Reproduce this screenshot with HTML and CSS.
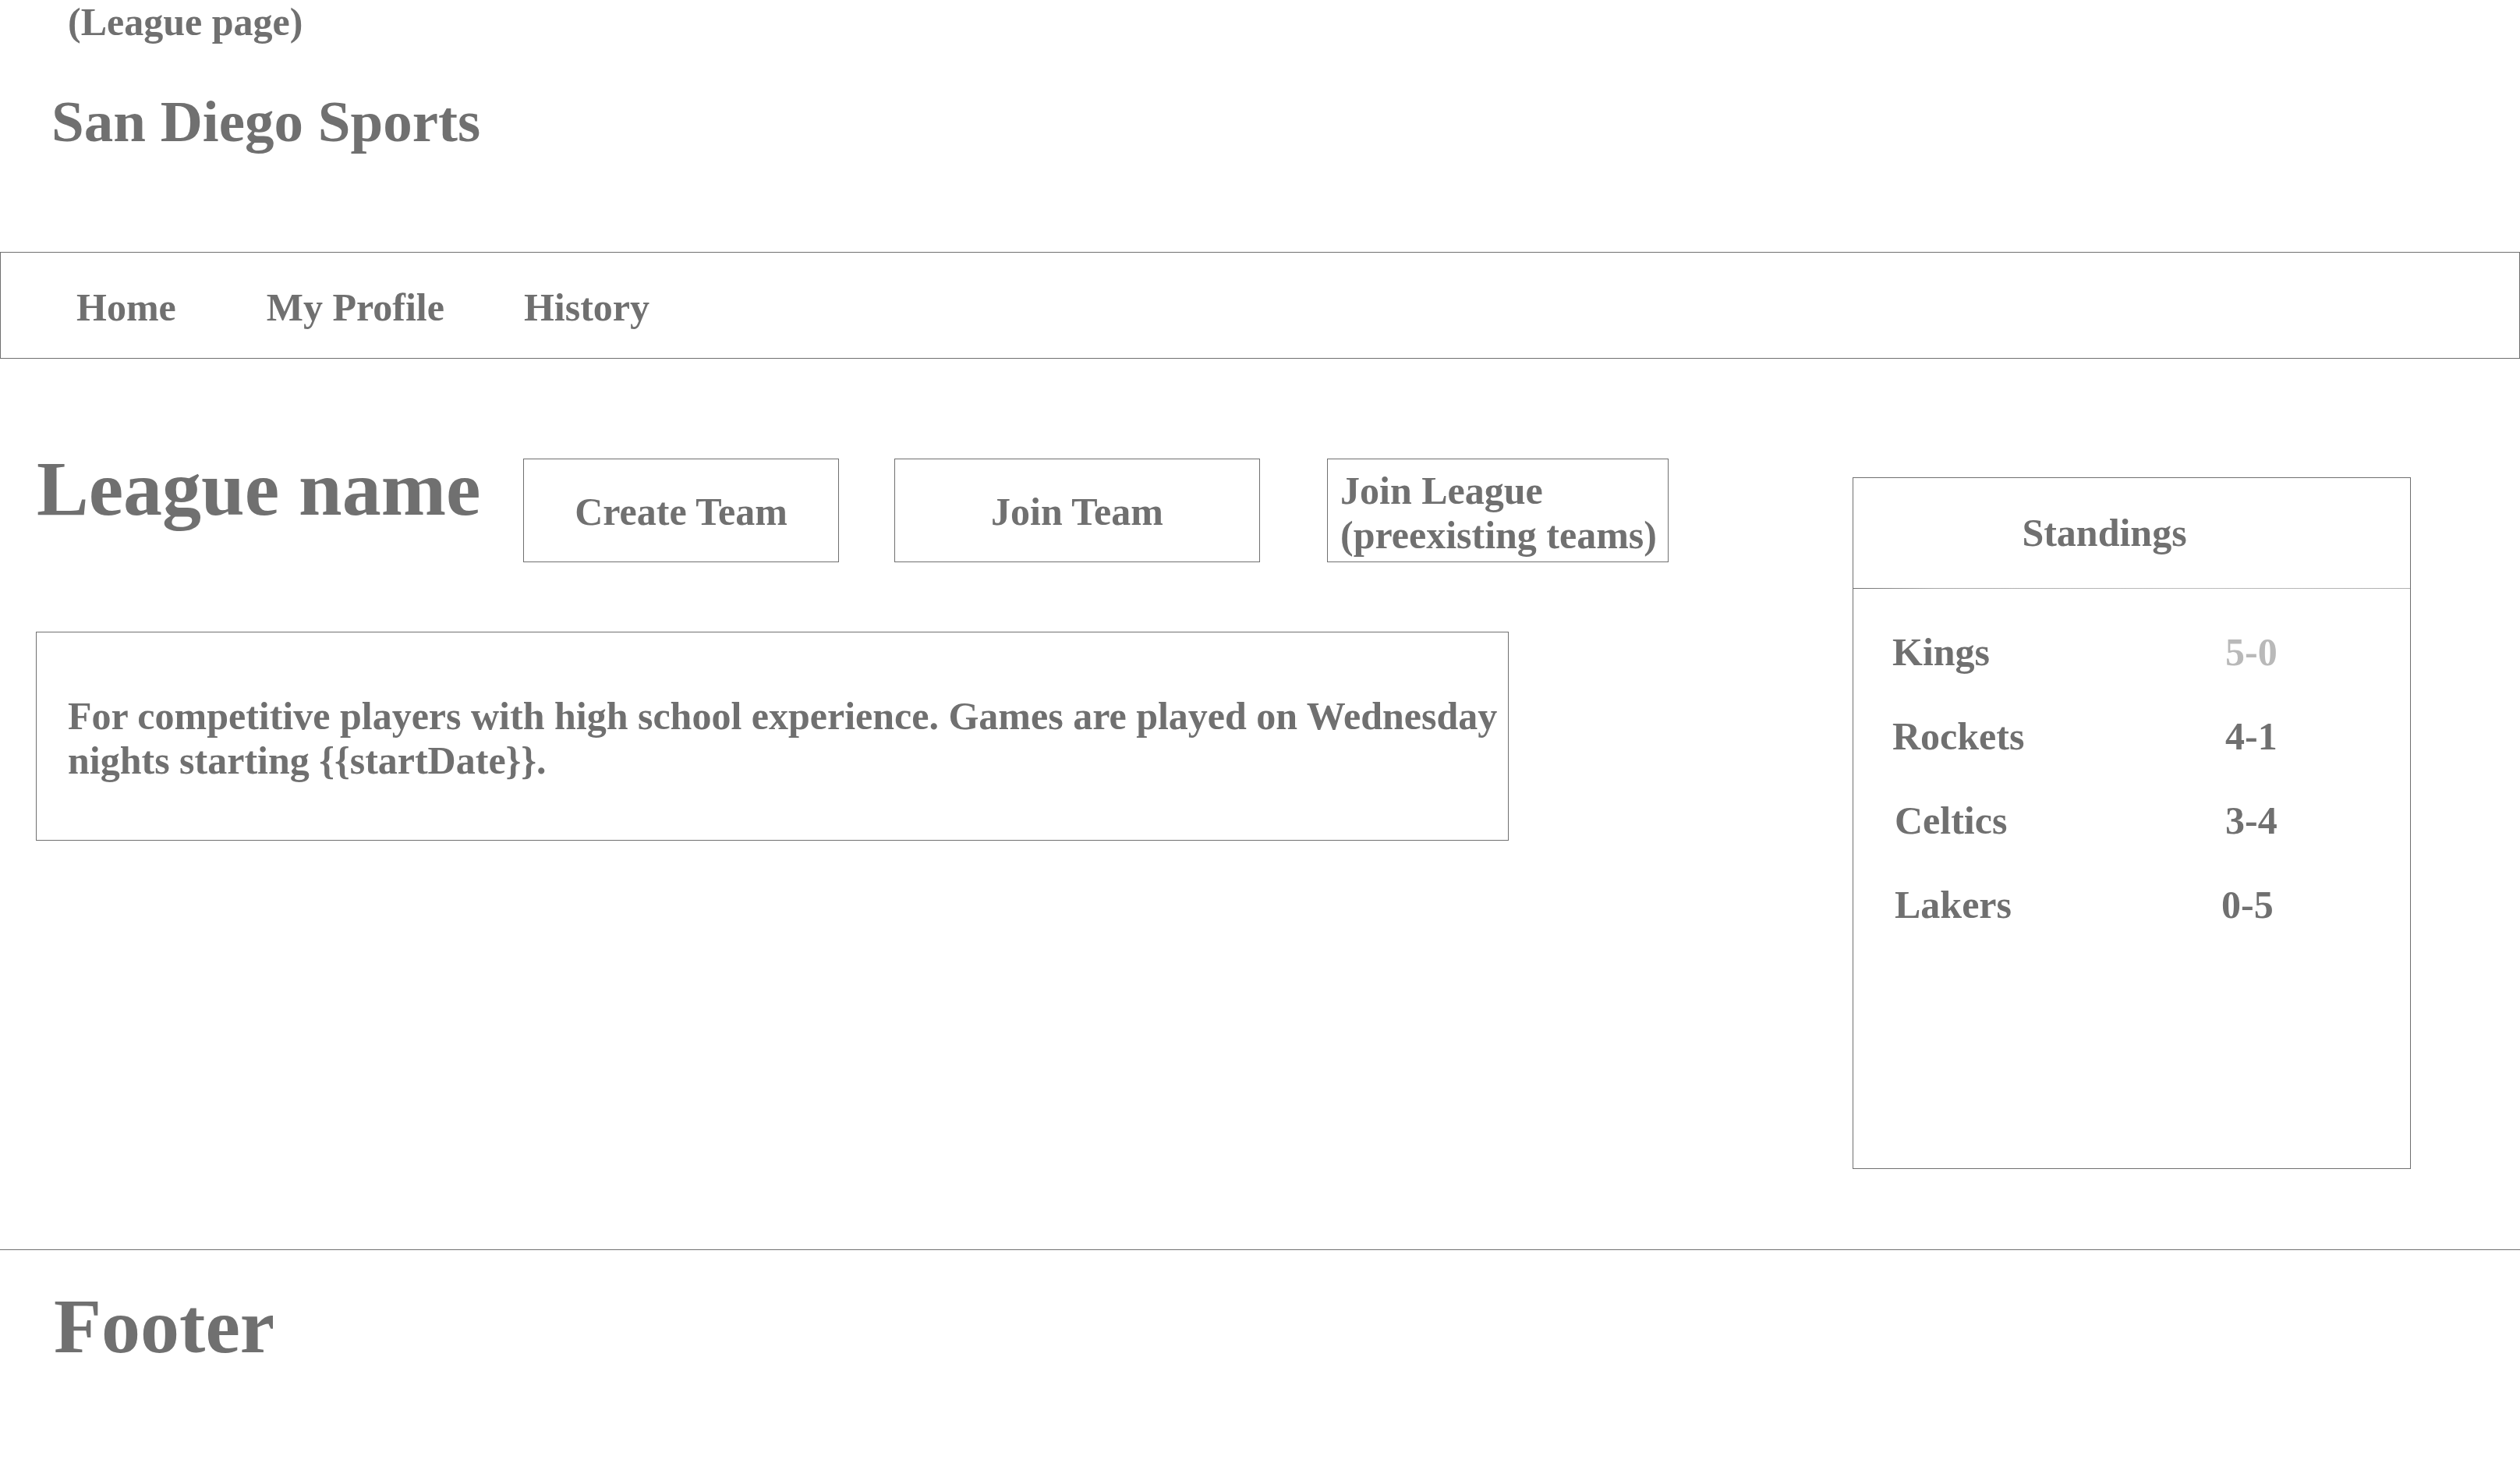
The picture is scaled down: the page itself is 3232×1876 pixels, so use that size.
FILE: index.html
```html
<!DOCTYPE html>
<html lang="en">
<head>
<meta charset="utf-8">
<title>San Diego Sports – League page</title>
<link rel="stylesheet" href="styles.css">
</head>
<body>
  <header class="site-header">
    <p class="page-label">(League page)</p>
    <h2 class="site-title">San Diego Sports</h2>
  </header>

  <nav class="nav">
    <a class="nav-link nav-link--home" href="#">Home</a>
    <a class="nav-link nav-link--profile" href="#">My Profile</a>
    <a class="nav-link" href="#">History</a>
  </nav>

  <main class="content">
    <section class="main">
      <div class="title-row">
        <h1 class="league-name">League name</h1>
        <button class="btn btn--create">Create Team</button>
        <button class="btn btn--join">Join Team</button>
        <button class="btn btn--league">Join League (preexisting teams)</button>
      </div>
      <div class="description">
        <p>For competitive players with high school experience. Games are played on Wednesday nights starting {{startDate}}.</p>
      </div>
    </section>

    <aside class="standings">
      <div class="standings-head">Standings</div>
      <div class="standings-divider"></div>
      <ul class="standings-list">
        <li class="standing"><span class="team">Kings</span><span class="record record--muted">5-0</span></li>
        <li class="standing"><span class="team">Rockets</span><span class="record">4-1</span></li>
        <li class="standing"><span class="team team--shift">Celtics</span><span class="record">3-4</span></li>
        <li class="standing"><span class="team team--shift">Lakers</span><span class="record record--left">0-5</span></li>
      </ul>
    </aside>
  </main>

  <footer class="footer">
    <h2 class="footer-title">Footer</h2>
  </footer>
</body>
</html>
```

FILE: styles.css
```css
* {
  box-sizing: border-box;
}

html, body {
  margin: 0;
  padding: 0;
  background: #ffffff;
}

body {
  font-family: "Liberation Serif", "Times New Roman", serif;
  font-weight: bold;
  color: #707070;
  width: 3232px;
  min-height: 1876px;
}

/* Header */
.site-header {
  display: flex;
  flex-direction: column;
}

.page-label {
  margin: 0;
  padding-left: 87px;
  font-size: 50px;
  line-height: 56px;
}

.site-title {
  margin: 55px 0 0;
  padding-left: 66px;
  font-size: 75px;
  line-height: 89px;
  font-weight: bold;
}

/* Nav */
.nav {
  margin-top: 123px;
  width: 100%;
  border: 1px solid #707070;
  padding: 42px 0 36px 97px;
  display: flex;
  align-items: center;
}

.nav-link {
  font-size: 50px;
  line-height: 57px;
  color: #707070;
  text-decoration: none;
}

.nav-link--home {
  margin-right: 116px;
}

.nav-link--profile {
  margin-right: 102px;
}

/* Content */
.content {
  margin-top: 117px;
  padding-left: 46px;
  display: flex;
  align-items: flex-start;
}

.main {
  flex: 1;
  display: flex;
  flex-direction: column;
}

.title-row {
  display: flex;
  align-items: flex-start;
}

.league-name {
  margin: 0;
  padding-left: 1px;
  width: 625px;
  font-size: 100px;
  line-height: 100px;
  font-weight: bold;
  white-space: nowrap;
}

.btn {
  margin-top: 11px;
  height: 133px;
  border: 1px solid #707070;
  background: #ffffff;
  font-family: inherit;
  font-weight: bold;
  font-size: 50px;
  line-height: 57px;
  color: #707070;
  padding: 4px 0 0;
  display: flex;
  align-items: center;
  justify-content: center;
  white-space: nowrap;
}

.btn--create {
  width: 405px;
}

.btn--join {
  width: 469px;
  margin-left: 71px;
}

.btn--league {
  width: 438px;
  margin-left: 86px;
  padding: 12px 0 0 16px;
  align-items: flex-start;
  justify-content: flex-start;
  text-align: left;
  white-space: normal;
}

.description {
  margin-top: 89px;
  width: 1889px;
  height: 268px;
  border: 1px solid #707070;
  padding: 79px 0 0 40px;
}

.description p {
  margin: 0;
  font-size: 50px;
  line-height: 57px;
}

/* Standings */
.standings {
  margin-top: 35px;
  margin-right: 140px;
  width: 716px;
  height: 887px;
  border: 1px solid #707070;
  display: flex;
  flex-direction: column;
  flex-shrink: 0;
}

.standings-head {
  height: 141px;
  display: flex;
  align-items: center;
  justify-content: center;
  padding-right: 70px;
  font-size: 50px;
  line-height: 57px;
}

.standings-divider {
  height: 1px;
  background: linear-gradient(to right, #707070, #a8a8a8 15%, #bdbdbd 60%, #b0b0b0);
}

.standings-list {
  list-style: none;
  margin: 0;
  padding: 27px 0 0 50px;
}

.standing {
  display: grid;
  grid-template-columns: 427px auto;
  font-size: 50px;
  line-height: 108px;
}

.team--shift {
  padding-left: 3px;
}

.record--muted {
  color: #b9b9b9;
}

.record--left {
  margin-left: -5px;
}

/* Footer */
.footer {
  margin-top: 103px;
  border-top: 1px solid #707070;
  padding: 48px 0 0 69px;
}

.footer-title {
  margin: 0;
  font-size: 100px;
  line-height: 100px;
  font-weight: bold;
}
```
